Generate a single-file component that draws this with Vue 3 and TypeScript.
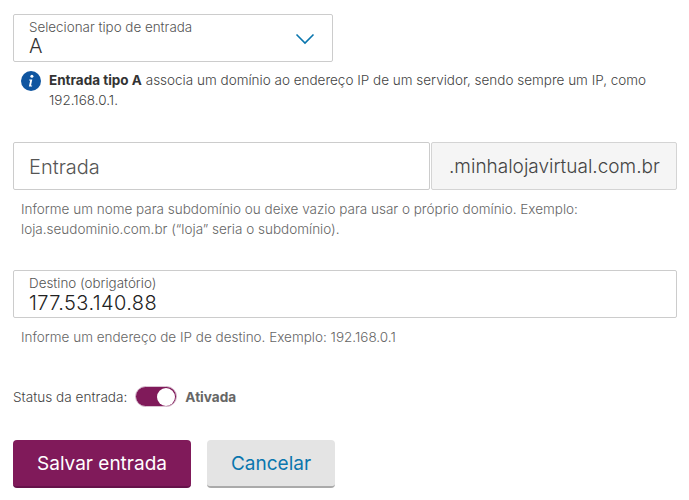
<template>
  <div class="page">
    <div class="select-box">
      <div class="field-text">
        <span class="float-label">Selecionar tipo de entrada</span>
        <span class="value select-value">A</span>
      </div>
      <svg class="chevron" width="20" height="12" viewBox="0 0 20 12">
        <path d="M1.5 1.5 L10 10 L18.5 1.5" fill="none" stroke="#0a76ae" stroke-width="1.6" />
      </svg>
    </div>

    <div class="info">
      <svg class="info-icon" width="20" height="20" viewBox="0 0 20 20">
        <circle cx="10" cy="10" r="10" fill="#0f55a0" />
        <circle cx="10.9" cy="5.2" r="1.5" fill="#fff" />
        <path d="M8.3 8.4 H11.3 L10 14.4 H11.2 L11 15.6 H7.9 L9.2 9.6 H8.1 Z" fill="#fff" />
      </svg>
      <p><strong>Entrada tipo A</strong> associa um domínio ao endereço IP de um servidor, sendo sempre um IP, como 192.168.0.1.</p>
    </div>

    <div class="entry-row">
      <div class="entry-input">Entrada</div>
      <div class="suffix">.minhalojavirtual.com.br</div>
    </div>
    <p class="hint">Informe um nome para subdomínio ou deixe vazio para usar o próprio domínio. Exemplo: loja.seudominio.com.br (“loja” seria o subdomínio).</p>

    <div class="dest-box">
      <span class="float-label">Destino (obrigatório)</span>
      <span class="value">177.53.140.88</span>
    </div>
    <p class="hint">Informe um endereço de IP de destino. Exemplo: 192.168.0.1</p>

    <div class="status">
      <span class="status-label">Status da entrada:</span>
      <span class="toggle"><span class="knob"></span></span>
      <span class="status-value">Ativada</span>
    </div>

    <div class="actions">
      <button class="btn primary">Salvar entrada</button>
      <button class="btn secondary">Cancelar</button>
    </div>
  </div>
</template>

<script setup lang="ts">
</script>

<style>
body {
  background: #fff;
}
</style>

<style scoped>
.page {
  box-sizing: border-box;
  width: 689px;
  height: 500px;
  padding: 14px 12px 0 13px;
  font-family: Inter, sans-serif;
  font-weight: 300;
  color: #666;
  overflow: hidden;
}

.select-box {
  box-sizing: border-box;
  width: 320px;
  height: 48px;
  border: 1px solid #ccc;
  border-radius: 2px;
  padding: 0 17px 0 15px;
  display: flex;
  align-items: center;
  justify-content: space-between;
}

.field-text {
  display: flex;
  flex-direction: column;
}

.float-label {
  font-size: 13.4px;
  line-height: 16px;
  color: #555;
}

.value {
  font-size: 20px;
  line-height: 24px;
  letter-spacing: 0.4px;
  color: #222;
}

.select-value {
  line-height: 22px;
  color: #333;
}

.chevron {
  margin-top: 2px;
}

.info {
  display: flex;
  gap: 8px;
  margin: 8px 0 0 8px;
}

.info-icon {
  flex: none;
  margin-top: 1px;
}

.info p {
  margin: 0;
  font-size: 13.5px;
  line-height: 20px;
  color: #444;
  width: 610px;
}

.info strong {
  font-weight: 700;
  color: #333;
}

.entry-row {
  display: flex;
  gap: 1px;
  margin-top: 32px;
  height: 48px;
}

.entry-input {
  box-sizing: border-box;
  width: 417px;
  border: 1px solid #ccc;
  border-radius: 2px;
  padding: 0 15px;
  font-size: 20px;
  line-height: 48px;
  color: #555;
}

.suffix {
  box-sizing: border-box;
  flex: 1;
  border: 1px solid #d4d4d4;
  border-radius: 2px;
  background: #f5f5f5;
  padding-left: 17px;
  font-size: 19px;
  line-height: 48px;
  color: #444;
}

.hint {
  margin: 9px 0 0 8px;
  width: 590px;
  font-size: 13.5px;
  line-height: 20px;
  color: #666;
}

.dest-box {
  box-sizing: border-box;
  height: 48px;
  margin-top: 31px;
  border: 1px solid #ccc;
  border-radius: 2px;
  padding: 4px 15px 0;
  display: flex;
  flex-direction: column;
}

.status {
  display: flex;
  align-items: center;
  gap: 8px;
  margin-top: 39px;
  font-size: 13.6px;
}

.status-label {
  color: #444;
}

.toggle {
  box-sizing: border-box;
  width: 42px;
  height: 21px;
  border: 1px solid #d9c3d2;
  border-radius: 11px;
  background: #801a5a;
  display: flex;
  justify-content: flex-end;
  align-items: center;
  padding-right: 1px;
}

.knob {
  width: 18px;
  height: 18px;
  border-radius: 50%;
  background: #fff;
}

.status-value {
  font-weight: 700;
  color: #666;
}

.actions {
  display: flex;
  gap: 16px;
  margin-top: 33px;
}

.btn {
  box-sizing: border-box;
  height: 48px;
  border: none;
  border-radius: 4px;
  font-family: inherit;
  font-size: 19px;
  font-weight: 400;
  cursor: pointer;
}

.primary {
  width: 178px;
  background: #801a5a;
  border-bottom: 2px solid #66124a;
  color: #fff;
}

.secondary {
  width: 128px;
  background: #e4e4e4;
  border-bottom: 2px solid #aaa;
  color: #0a76ae;
}
</style>
